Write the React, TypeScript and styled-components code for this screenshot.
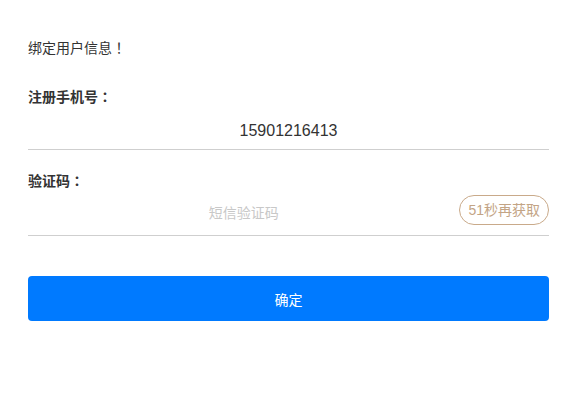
import React from "react";
import styled, { createGlobalStyle } from "styled-components";

const Global = createGlobalStyle`
  html, body { margin: 0; padding: 0; background: #fff; }
  body { font-family: "Liberation Sans", "Noto Sans CJK SC", sans-serif; color: #333; }
  * { box-sizing: border-box; }
`;

const Page = styled.div`
  width: 521px;
  margin-left: 28px;
  padding-top: 38px;
  display: flex;
  flex-direction: column;
`;

const Title = styled.div`
  font-size: 14px;
  line-height: 20px;
  height: 20px;
  color: #333;
`;

const Punct = styled.span`
  font-family: "Noto Sans CJK JP", "Noto Sans CJK SC", sans-serif;
  line-height: 12px;
`;

const Label = styled.div<{ $top: number }>`
  margin-top: ${(p) => p.$top}px;
  font-size: 14px;
  line-height: 20px;
  height: 20px;
  font-weight: bold;
  color: #333;
`;

const Row = styled.div<{ $height: number }>`
  display: flex;
  align-items: center;
  height: ${(p) => p.$height}px;
  border-bottom: 1px solid #cfcfcf;
`;

const Field = styled.div<{ $placeholder?: boolean }>`
  flex: 1;
  text-align: center;
  font-size: ${(p) => (p.$placeholder ? 14 : 16)}px;
  line-height: 20px;
  color: ${(p) => (p.$placeholder ? "#c8c8c8" : "#333")};
  margin-top: ${(p) => (p.$placeholder ? 0 : 5)}px;
`;

const Pill = styled.div`
  height: 30px;
  padding: 0 8px;
  border: 1px solid #c9aa8a;
  border-radius: 15px;
  color: #c3a485;
  font-size: 14px;
  line-height: 28px;
  white-space: nowrap;
  margin-top: -6px;
`;

const Submit = styled.button`
  margin-top: 40px;
  height: 45px;
  width: 100%;
  border: none;
  border-radius: 4px;
  background: #007aff;
  color: #fff;
  font-family: inherit;
  font-size: 14px;
  padding: 0;
`;

export default function App() {
  return (
    <>
      <Global />
      <Page>
        <Title>
          绑定用户信息<Punct>！</Punct>
        </Title>
        <Label $top={29}>
          注册手机号<Punct>：</Punct>
        </Label>
        <Row $height={43}>
          <Field>15901216413</Field>
        </Row>
        <Label $top={21}>
          验证码<Punct>：</Punct>
        </Label>
        <Row $height={45}>
          <Field $placeholder>短信验证码</Field>
          <Pill>51秒再获取</Pill>
        </Row>
        <Submit>确定</Submit>
      </Page>
    </>
  );
}
